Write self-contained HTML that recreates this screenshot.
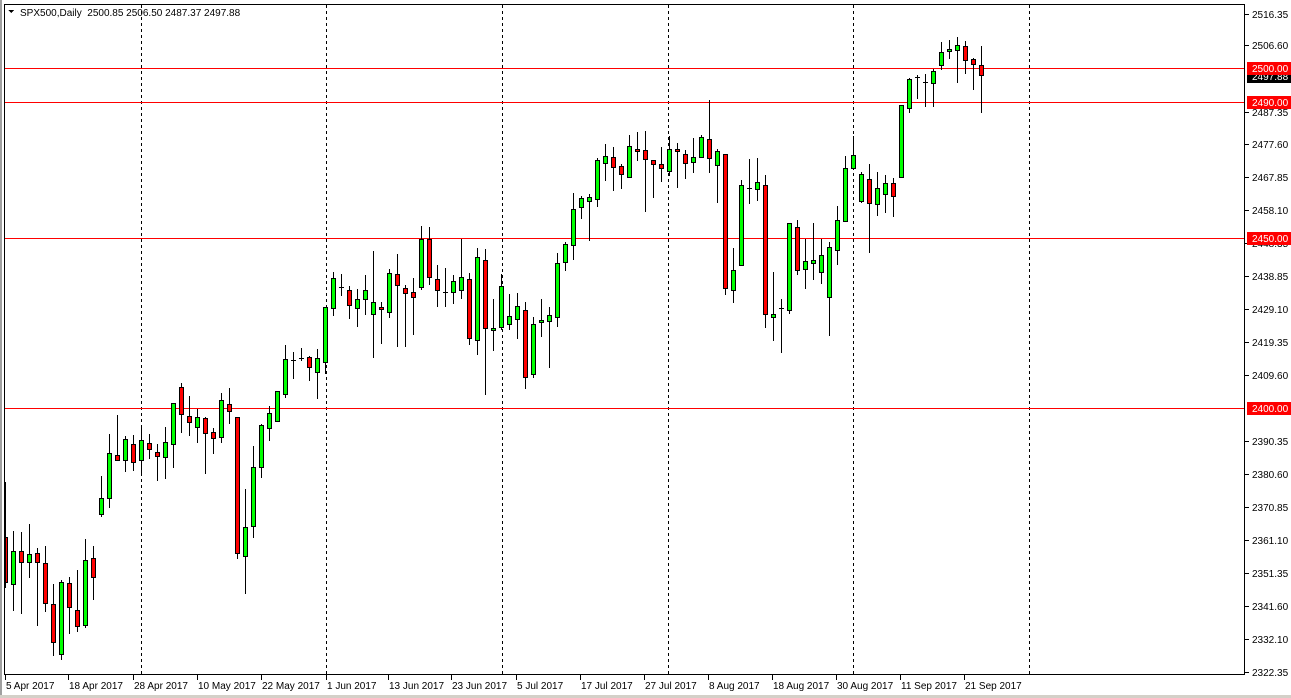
<!DOCTYPE html>
<html><head><meta charset="utf-8"><style>
html,body{margin:0;padding:0;background:#fff;}
body{width:1291px;height:698px;overflow:hidden;position:relative;font-family:"Liberation Sans",sans-serif;}
svg{position:absolute;left:0;top:0;}
text{font-family:"Liberation Sans",sans-serif;font-size:10px;}
</style></head><body>
<svg id="s" width="1291" height="698" xmlns="http://www.w3.org/2000/svg" shape-rendering="crispEdges"></svg>
<script>
var s=document.getElementById('s');var h='';
h+='<rect x="0" y="0" width="1291" height="698" fill="#fff"/>';
h+='<rect x="0" y="0" width="2" height="698" fill="#a0a0a0"/>';
h+='<rect x="0" y="695" width="1291" height="3" fill="#d4d0c8"/>';
[141,326,502,668,853,1029].forEach(function(x){h+='<line x1="'+(x+.5)+'" y1="5" x2="'+(x+.5)+'" y2="674" stroke="#000" stroke-dasharray="3,3"/>';});
[68,102,238,408].forEach(function(y){h+='<line x1="5" y1="'+(y+.5)+'" x2="1245" y2="'+(y+.5)+'" stroke="#f00"/>';});
var d=[
['r',482,537,582,587],['g',531,551,584,610],['r',532,551,562,613],['g',524,554,562,577],['r',548,553,562,625],
['r',546,563,603,611],['r',584,604,642,655],['g',580,582,654,659],['r',577,583,607,633],['r',570,610,626,631],
['g',539,560,625,627],['r',546,558,577,599],['g',476,498,514,516],['g',434,453,498,507],['r',415,455,460,460],
['g',436,439,460,471],['r',435,444,462,470],['g',428,440,460,475],['r',434,443,449,458],['r',444,452,456,480],
['g',427,442,457,478],['g',403,403,444,467],['r',383,387,414,432],['r',396,416,422,435],['g',409,417,427,442],
['r',417,418,433,473],['r',428,432,438,453],['g',393,400,437,442],['r',388,404,411,423],['r',417,417,553,558],
['g',489,527,556,593],['g',446,467,526,537],['g',424,425,467,477],['g',406,413,428,440],['g',391,391,421,421],
['g',345,359,394,397],['d',352,360,360,378],['d',348,358,358,360],['r',356,357,367,380],['g',349,358,372,398],
['g',307,307,362,373],['g',272,278,308,315],['d',274,287,287,295],['r',286,290,305,318],['g',289,299,308,326],
['g',275,290,299,314],['g',251,302,314,357],['r',302,307,309,343],['g',269,273,312,317],['r',254,274,285,346],
['r',285,288,293,346],['r',278,292,297,334],['g',226,239,287,289],['r',227,239,277,284],['r',265,279,290,306],
['d',268,292,292,306],['g',275,281,292,303],['g',239,277,290,298],['r',273,279,338,344],['g',248,257,340,354],
['r',249,260,328,394],['g',299,328,330,350],['g',274,286,327,329],['g',294,316,324,329],['g',293,306,319,338],
['r',302,310,377,388],['g',317,324,374,377],['g',299,320,322,336],['g',307,315,321,367],['g',253,263,317,326],
['g',242,244,262,270],['g',193,209,245,259],['g',196,198,207,218],['g',194,197,201,240],['g',158,160,199,206],
['g',144,156,163,180],['r',147,157,167,190],['r',164,166,174,188],['g',135,146,177,177],['r',132,149,151,160],
['r',131,150,159,211],['r',160,160,164,197],['r',147,164,168,181],['g',136,149,171,175],['r',143,149,151,187],
['r',150,154,163,178],['g',138,157,162,172],['g',135,137,157,157],['r',100,139,158,172],['g',149,151,165,202],
['r',154,154,288,294],['g',248,270,290,302],['g',180,185,265,265],['d',159,188,188,203],['g',158,182,189,200],
['r',175,185,314,327],['g',272,314,317,340],['d',299,308,308,352],['g',223,223,310,313],['r',220,227,270,274],
['g',239,261,269,288],['g',223,260,263,279],['g',239,255,272,283],['g',242,247,297,335],['g',206,220,250,264],
['g',156,168,221,221],['g',136,155,168,168],['g',172,174,201,202],['r',164,179,203,252],['g',172,188,204,215],
['g',175,183,194,212],['r',178,183,196,216],['g',105,105,177,177],['g',78,79,108,112],['d',75,77,77,98],
['d',74,82,82,106],['g',69,71,83,106],['g',42,52,65,69],['g',40,49,51,58],['g',37,45,50,82],
['r',41,46,60,73],['r',58,59,64,89],['r',46,65,75,112]];
d.forEach(function(c,i){var x=5+8*i;
 var lo=Math.min(c[4],673);
 h+='<line x1="'+(x+.5)+'" y1="'+c[1]+'" x2="'+(x+.5)+'" y2="'+(lo+1)+'" stroke="#000"/>';
 if(c[0]=='d'){h+='<rect x="'+(x-2)+'" y="'+c[2]+'" width="5" height="1" fill="#000"/>';}
 else{var bx=Math.max(x-2,5);var w=x+2-bx;var ht=Math.max(c[3]-c[2],1);
  h+='<rect x="'+(bx+.5)+'" y="'+(c[2]+.5)+'" width="'+w+'" height="'+ht+'" fill="'+(c[0]=='g'?'#00ff00':'#ff0000')+'" stroke="#000"/>';}
});
h+='<rect x="4.5" y="4.5" width="1240" height="670" fill="none" stroke="#000"/>';
h+='<polygon points="8,10 14,10 11,13" fill="#000"/>';
h+='<text x="20" y="16" fill="#000" xml:space="preserve">SPX500,Daily&#160;&#160;2500.85 2506.50 2487.37 2497.88</text>';
var lab=[['2516.35',14],['2506.60',45],['2487.35',112],['2477.60',144],['2467.85',177],['2458.10',210],['2448.35',243],['2438.85',276],['2429.10',309],['2419.35',342],['2409.60',375],['2390.35',441],['2380.60',474],['2370.85',507],['2361.10',540],['2351.35',573],['2341.60',606],['2332.10',639],['2322.35',672]];
lab.forEach(function(l){h+='<line x1="1245" y1="'+(l[1]+.5)+'" x2="1249" y2="'+(l[1]+.5)+'" stroke="#000"/><text x="1252" y="'+(l[1]+4)+'" fill="#000">'+l[0]+'</text>';});
h+='<rect x="1247" y="70" width="44" height="13" fill="#000"/><text x="1252" y="80" fill="#fff">2497.88</text>';
[['2500.00',68],['2490.00',102],['2450.00',238],['2400.00',408]].forEach(function(l){h+='<rect x="1247" y="'+(l[1]-6)+'" width="44" height="13" fill="#f00"/><text x="1252" y="'+(l[1]+4)+'" fill="#fff">'+l[0]+'</text>';});
var bl=[['5 Apr 2017',5],['18 Apr 2017',68],['28 Apr 2017',133],['10 May 2017',197],['22 May 2017',261],['1 Jun 2017',326],['13 Jun 2017',388],['23 Jun 2017',451],['5 Jul 2017',516],['17 Jul 2017',580],['27 Jul 2017',644],['8 Aug 2017',708],['18 Aug 2017',772],['30 Aug 2017',836],['11 Sep 2017',900],['21 Sep 2017',964]];
bl.forEach(function(l){h+='<line x1="'+(l[1]+.5)+'" y1="675" x2="'+(l[1]+.5)+'" y2="680" stroke="#000"/><text x="'+(l[1]+1)+'" y="689" fill="#000">'+l[0]+'</text>';});
s.innerHTML=h;
</script>
</body></html>
